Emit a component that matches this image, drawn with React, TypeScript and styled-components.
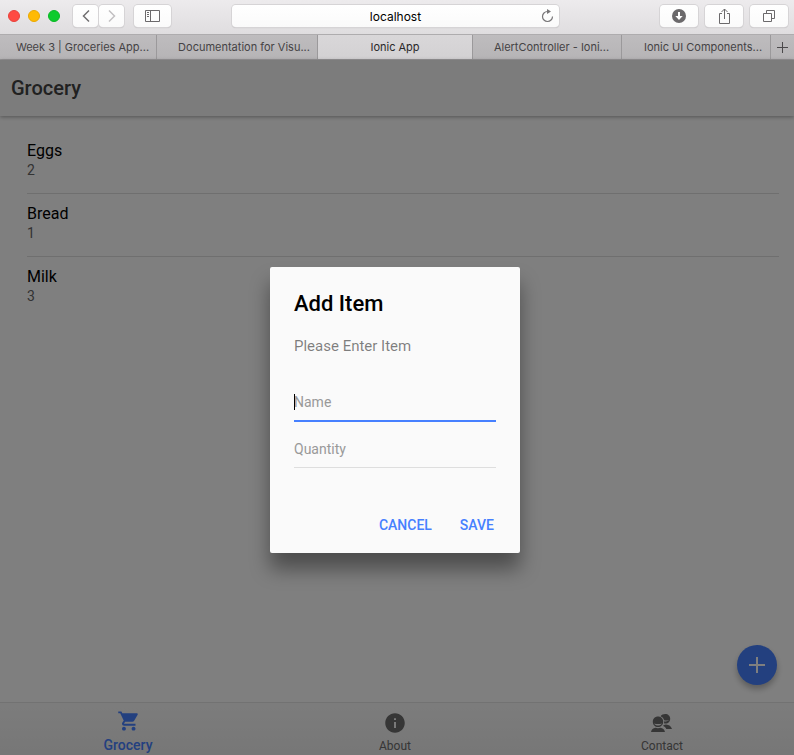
import React from 'react';
import styled, { createGlobalStyle, css } from 'styled-components';
import { IoMdCart, IoMdInformationCircle } from 'react-icons/io';

const GlobalStyle = createGlobalStyle`
  * { box-sizing: border-box; }
  html, body, #root { height: 100%; }
  body { margin: 0; font-family: Roboto, "Liberation Sans", sans-serif; }
  button, input { font-family: inherit; }
  h1, h2, h3, p, ul { margin: 0; padding: 0; }
`;

const Window = styled.div`
  display: flex;
  flex-direction: column;
  min-height: 100vh;
`;

const Toolbar = styled.header`
  display: grid;
  grid-template-columns: minmax(0, 224fr) minmax(120px, 327fr) minmax(0, 229fr);
  align-items: center;
  height: 34px;
  padding: 0 6px 2px 8px;
  background: linear-gradient(#edebed, #dfdddf);
  font-family: Inter, "Liberation Sans", sans-serif;
`;

const ToolGroup = styled.div<{ $end?: boolean }>`
  display: flex;
  align-items: center;
  gap: ${p => (p.$end ? 7 : 10)}px;
  justify-content: ${p => (p.$end ? 'flex-end' : 'flex-start')};
`;

const Lights = styled.div`
  display: flex;
  gap: 8px;
  margin-right: 3px;
`;

const Light = styled.button<{ $color: string; $edge: string }>`
  width: 12px;
  height: 12px;
  padding: 0;
  border: 1px solid ${p => p.$edge};
  border-radius: 50%;
  background: ${p => p.$color};
`;

const raised = css`
  border: 0;
  border-radius: 4px;
  background: linear-gradient(#ffffff, #fafafa);
  box-shadow: 0 0 0 1px #d6d4d6, 0 1px 1px #bab8ba;
`;

const Pair = styled.div`
  display: flex;
  gap: 1px;
`;

const ToolButton = styled.button<{ $width: number }>`
  ${raised}
  display: flex;
  align-items: center;
  justify-content: center;
  width: ${p => p.$width}px;
  height: 22px;
  padding: 0;
`;

const Address = styled.div`
  ${raised}
  display: flex;
  align-items: center;
  height: 22px;
`;

const AddressInput = styled.input`
  flex: 1;
  min-width: 0;
  padding: 0 0 0 24px;
  border: 0;
  outline: 0;
  background: transparent;
  color: #000;
  font-size: 12px;
  text-align: center;
`;

const Reload = styled.button`
  display: flex;
  justify-content: center;
  width: 24px;
  padding: 0;
  border: 0;
  background: transparent;
`;

const TabStrip = styled.nav`
  display: grid;
  grid-template-columns:
    minmax(0, 157fr) minmax(0, 161fr) minmax(0, 155fr)
    minmax(0, 149fr) minmax(0, 149fr) 23px;
  height: 26px;
  border-top: 1px solid #aeacae;
  border-bottom: 1px solid #979597;
  background: linear-gradient(#bebcbe, #b6b4b6);
  font-family: Inter, "Liberation Sans", sans-serif;
`;

const BrowserTab = styled.button<{ $inset: number; $active?: boolean }>`
  padding: 0 0 0 ${p => p.$inset}px;
  border: 0;
  border-right: 1px solid #9b999b;
  background: ${p => (p.$active ? 'linear-gradient(#d9d7d9, #d3d1d3)' : 'transparent')};
  color: ${p => (p.$active ? '#2a282a' : '#454345')};
  font-size: 11px;
  white-space: nowrap;
  overflow: hidden;
`;

const NewTab = styled.button`
  display: flex;
  align-items: center;
  justify-content: center;
  padding: 0;
  border: 0;
  background: transparent;
`;

const Viewport = styled.div`
  position: relative;
  display: flex;
  flex: 1;
  flex-direction: column;
  background: #fff;
`;

const AppHeader = styled.header`
  display: flex;
  align-items: center;
  height: 56px;
  padding: 0 11px;
  background: #f8f8f8;
  box-shadow: 0 1px 4px rgba(0, 0, 0, 0.35);
`;

const PageTitle = styled.h1`
  color: #424242;
  font-size: 20px;
  font-weight: 500;
`;

const Content = styled.main`
  flex: 1;
  padding: 15px 15px 0 27px;
`;

const Items = styled.ul`
  list-style: none;
`;

const Item = styled.li`
  height: 63px;
  padding-top: 9px;
  border-bottom: 1px solid #dedede;

  &:last-child { border-bottom: 0; }
`;

const ItemName = styled.h2`
  font-size: 16px;
  font-weight: 400;
  line-height: 22px;
`;

const ItemCount = styled.p`
  color: #666;
  font-size: 14px;
  line-height: 17px;
`;

const AddButton = styled.button`
  position: absolute;
  right: 17px;
  bottom: 70px;
  display: flex;
  align-items: center;
  justify-content: center;
  width: 40px;
  height: 40px;
  padding: 0;
  border: 0;
  border-radius: 50%;
  background: #4680ff;
  box-shadow: 0 4px 6px rgba(0, 0, 0, 0.28);
`;

const BottomTabs = styled.nav`
  display: grid;
  grid-template-columns: 256fr 278fr 256fr;
  height: 53px;
  padding-right: 4px;
  border-top: 1px solid #e4e4e4;
  background: linear-gradient(#f9f9f9, #eeeeee);
`;

const BottomTab = styled.a<{ $active?: boolean }>`
  display: flex;
  flex-direction: column;
  align-items: center;
  gap: ${p => (p.$active ? 2 : 1)}px;
  padding-top: ${p => (p.$active ? 6 : 8)}px;
  color: ${p => (p.$active ? '#4680ff' : '#6c6c6c')};
  font-size: ${p => (p.$active ? 14 : 12)}px;
  font-weight: ${p => (p.$active ? 500 : 400)};
  line-height: 20px;
  text-decoration: none;
  white-space: nowrap;

  svg { flex: none; }
`;

const Backdrop = styled.div`
  position: absolute;
  inset: 0;
  display: flex;
  align-items: center;
  justify-content: center;
  padding: 5px 4px 0 0;
  background: rgba(0, 0, 0, 0.5);
`;

const Dialog = styled.form`
  width: 250px;
  border-radius: 2px;
  background: #fafafa;
  box-shadow: 0 16px 20px rgba(0, 0, 0, 0.4);
`;

const DialogHead = styled.div`
  padding: 22px 24px 20px;
`;

const DialogTitle = styled.h2`
  color: #000;
  font-size: 22px;
  font-weight: 500;
  line-height: 30px;
`;

const DialogText = styled.p`
  padding-top: 16px;
  color: rgba(0, 0, 0, 0.5);
  font-size: 15px;
  line-height: 22px;
`;

const Fields = styled.div`
  display: flex;
  flex-direction: column;
  gap: 10px;
  padding: 8px 24px 23px;
`;

const Field = styled.input`
  display: block;
  width: 100%;
  height: 36px;
  padding: 0 0 2px;
  border: 0;
  border-bottom: 1px solid #dedede;
  border-radius: 0;
  outline: 0;
  background: transparent;
  color: #000;
  font-size: 14px;

  &::placeholder { color: #999; }
  &:focus { height: 37px; border-bottom: 2px solid #4680ff; }
`;

const NameField = styled.label`
  position: relative;
  display: block;
  height: 37px;
`;

const NameInput = styled(Field)`
  caret-color: transparent;
`;

const Caret = styled.span`
  position: absolute;
  top: 9px;
  left: 0;
  width: 1px;
  height: 16px;
  background: #000;
`;

const Actions = styled.div`
  display: flex;
  justify-content: flex-end;
  gap: 8px;
  padding: 16px 16px 10px;
`;

const ActionButton = styled.button`
  height: 36px;
  padding: 0 10px;
  border: 0;
  background: transparent;
  color: #4680ff;
  font-size: 14px;
  font-weight: 500;
  text-transform: uppercase;
`;

const line = { fill: 'none', stroke: '#6b696b', strokeWidth: 1 };

const Chevron = ({ forward }: { forward?: boolean }) => (
  <svg width="8" height="14" viewBox="0 0 8 14" fill="none" stroke={forward ? '#c2c0c2' : '#706e70'} strokeWidth="1.5">
    <path d={forward ? 'M1 1.5 6.5 7 1 12.5' : 'M7 1.5 1.5 7 7 12.5'} />
  </svg>
);

const SidebarIcon = () => (
  <svg width="15" height="12" viewBox="0 0 15 12" {...line}>
    <path d="M.5.5h14v11H.5zM5.5.5v11M2 2.5h2M2 4.5h2M2 6.5h2" />
  </svg>
);

const ReloadIcon = () => (
  <svg width="13" height="14" viewBox="0 0 13 14" fill="none" stroke="#777577" strokeWidth="1.2">
    <path d="M6.5 2.5A5 5 0 1 0 11.5 7.5" />
    <path d="M6 0v5L10 2.6Z" fill="#777577" stroke="none" />
  </svg>
);

const DownloadIcon = () => (
  <svg width="14" height="14" viewBox="0 0 14 14">
    <circle cx="7" cy="7" r="7" fill="#6b696b" />
    <path d="M6 3h2v4h2.7L7 11 3.3 7H6Z" fill="#fff" />
  </svg>
);

const ShareIcon = () => (
  <svg width="13" height="16" viewBox="0 0 13 16" {...line}>
    <path d="M4 5.5H1.5v10h10v-10H9M6.5 11V1M3.5 4l3-3 3 3" />
  </svg>
);

const WindowsIcon = () => (
  <svg width="12" height="12" viewBox="0 0 12 12" {...line}>
    <path d="M.5 3.5h8v8h-8zM3.5 3V.5h8v8H9" />
  </svg>
);

const PlusIcon = ({ size, color, width }: { size: number; color: string; width: number }) => (
  <svg width={size} height={size} viewBox="0 0 16 16" stroke={color} strokeWidth={width}>
    <path d="M8 0v16M0 8h16" />
  </svg>
);

const ContactsIcon = () => (
  <svg width="24" height="24" viewBox="-1 -3 24 24" fill="currentColor" fillRule="evenodd">
    <path d="M9.5 2.2C10.500.8 12.300 0 14.200 0c3 0 5 2.100 5 4.800 0 2.600-2 4.800-4.600 4.800-.7 0-1.200-.1-1.700-.4.2-.6.3-1.300.3-2 1.800.4 3.600.2 4.900-1-1.600.4-3.400.4-5 0-.4-1.800-1.700-3.300-3.600-4Z" />
    <path d="M12.600 11.200c.9-.5 1.500-.8 2.400-.8 3.300.2 5.100 1.800 6 4.600h-5.700c-.6-1.400-1.500-2.300-3.200-3Z" />
    <path d="M7 2.500c3 0 5.200 2.200 5.200 5.200 0 3.100-2.300 5.300-5.200 5.300S1.800 10.800 1.800 7.700c0-3 2.200-5.200 5.200-5.200ZM3.200 9.400c1.300 2.700 6.300 2.700 7.600 0-2 .9-5.600.9-7.600 0Z" />
    <path d="M0 18c.5-2.500 2-3.900 4.600-4.200 1.500.6 3.300.6 4.800 0 2.500.3 4 1.700 4.600 4.200Z" />
  </svg>
);

const browserTabs = [
  { label: 'Week 3 | Groceries App...', inset: 9 },
  { label: 'Documentation for Visu...', inset: 14 },
  { label: 'Ionic App', inset: 0, active: true },
  { label: 'AlertController - Ioni...', inset: 9 },
  { label: 'Ionic UI Components...', inset: 14 },
];

const groceries = [
  { name: 'Eggs', quantity: 2 },
  { name: 'Bread', quantity: 1 },
  { name: 'Milk', quantity: 3 },
];

export default function App() {
  return (
    <Window>
      <GlobalStyle />
      <Toolbar>
        <ToolGroup>
          <Lights>
            <Light aria-label="Close" $color="#ff4a42" $edge="#e8413b" />
            <Light aria-label="Minimize" $color="#ffba05" $edge="#eba900" />
            <Light aria-label="Zoom" $color="#0ccb2c" $edge="#09b824" />
          </Lights>
          <Pair>
            <ToolButton $width={25} aria-label="Back"><Chevron /></ToolButton>
            <ToolButton $width={25} aria-label="Forward"><Chevron forward /></ToolButton>
          </Pair>
          <ToolButton $width={37} aria-label="Sidebar"><SidebarIcon /></ToolButton>
        </ToolGroup>
        <Address>
          <AddressInput aria-label="Address" defaultValue="localhost" />
          <Reload aria-label="Reload"><ReloadIcon /></Reload>
        </Address>
        <ToolGroup $end>
          <ToolButton $width={38} aria-label="Downloads"><DownloadIcon /></ToolButton>
          <ToolButton $width={38} aria-label="Share"><ShareIcon /></ToolButton>
          <ToolButton $width={38} aria-label="Show all tabs"><WindowsIcon /></ToolButton>
        </ToolGroup>
      </Toolbar>
      <TabStrip>
        {browserTabs.map(t => (
          <BrowserTab key={t.label} $inset={t.inset} $active={t.active}>{t.label}</BrowserTab>
        ))}
        <NewTab aria-label="New tab"><PlusIcon size={11} color="#4b494b" width={1.5} /></NewTab>
      </TabStrip>
      <Viewport>
        <AppHeader><PageTitle>Grocery</PageTitle></AppHeader>
        <Content>
          <Items>
            {groceries.map(g => (
              <Item key={g.name}>
                <ItemName>{g.name}</ItemName>
                <ItemCount>{g.quantity}</ItemCount>
              </Item>
            ))}
          </Items>
        </Content>
        <AddButton aria-label="Add"><PlusIcon size={16} color="#fff" width={2} /></AddButton>
        <BottomTabs>
          <BottomTab href="#grocery" $active><IoMdCart size={24} />Grocery</BottomTab>
          <BottomTab href="#about"><IoMdInformationCircle size={24} />About</BottomTab>
          <BottomTab href="#contact"><ContactsIcon />Contact</BottomTab>
        </BottomTabs>
        <Backdrop>
          <Dialog role="dialog" aria-labelledby="dialog-title" onSubmit={e => e.preventDefault()}>
            <DialogHead>
              <DialogTitle id="dialog-title">Add Item</DialogTitle>
              <DialogText>Please Enter Item</DialogText>
            </DialogHead>
            <Fields>
              <NameField>
                <NameInput aria-label="Name" placeholder="Name" autoFocus />
                <Caret />
              </NameField>
              <Field aria-label="Quantity" placeholder="Quantity" />
            </Fields>
            <Actions>
              <ActionButton type="button">Cancel</ActionButton>
              <ActionButton type="submit">Save</ActionButton>
            </Actions>
          </Dialog>
        </Backdrop>
      </Viewport>
    </Window>
  );
}
